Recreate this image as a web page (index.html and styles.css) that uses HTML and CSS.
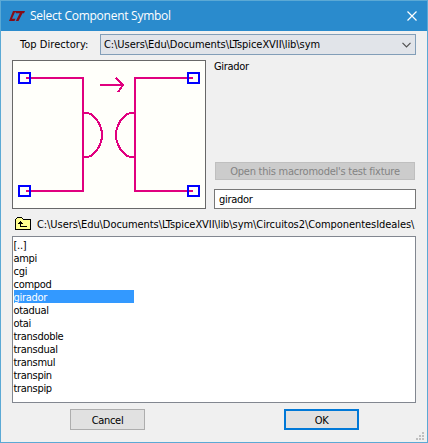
FILE: index.html
```html
<!DOCTYPE html>
<html lang="en">
<head>
<meta charset="utf-8">
<title>Select Component Symbol</title>
<link rel="stylesheet" href="styles.css">
</head>
<body>
<div class="dialog">
  <header class="titlebar">
    <svg class="logo" width="16" height="12" viewBox="0 0 16 12"><path fill="#850d18" d="M4 1H6.500L3 8.800H6.500L5.500 11H0ZM6.300 1H16L15 3.300H13.500L9.500 11H6.800L10.800 3.300H6.800Z"/></svg>
    <h1 class="title">Select Component Symbol</h1>
    <svg class="close" width="10" height="10" viewBox="0 0 10 10"><path fill="none" stroke="#fff" stroke-width="1.2" d="M.5.5l9 9M9.500.5l-9 9"/></svg>
  </header>
  <main class="content">
    <div class="directory">
      <span class="label">Top Directory:</span>
      <div class="combo"><span class="combo-text">C:\Users\Edu\Documents\LTspiceXVII\lib\sym</span>
        <svg width="9" height="6" viewBox="0 0 9 6"><path fill="none" stroke="#505050" stroke-width="1.2" d="M.5.8l4 4 4-4"/></svg>
      </div>
    </div>
    <div class="detail">
      <svg class="preview" width="192" height="147" viewBox="13 61 192 147">
        <g fill="none" stroke="#e0007f" stroke-width="2" shape-rendering="crispEdges">
          <path d="M26 78H83V191H26"/>
          <path d="M193 78H135V191H193"/>
          <path d="M84 113H88C95 115 102 125 102 135S95 155 88 157H84"/>
          <path d="M134 113H130C123 115 116 125 116 135S123 155 130 157H134"/>
          <path d="M100 85H123M116 78L123 85L118 92"/>
        </g>
        <g fill="none" stroke="#00f" stroke-width="2" shape-rendering="crispEdges">
          <path d="M19 73H30V83H19ZM188 73H199V83H188ZM19 186H30V196H19ZM188 186H199V196H188Z"/>
        </g>
      </svg>
      <div class="info">
        <p class="description">Girador</p>
        <button class="fixture" disabled><span>Open this macromodel's test fixture</span></button>
        <div class="name-field">girador</div>
      </div>
    </div>
    <div class="path">
      <svg width="16" height="13" viewBox="0 0 16 13" shape-rendering="crispEdges"><path fill="#ffff90" stroke="#000" d="M.5 12.500V2.500L2.500.5H6.500L8.500 2.500H15.500V12.500Z"/><path fill="none" stroke="#000" d="M5.500 4V9.500H12M3 6.500H8M4 5.500H7"/></svg>
      <span class="path-text">C:\Users\Edu\Documents\LTspiceXVII\lib\sym\Circuitos2\ComponentesIdeales\</span>
    </div>
    <ul class="list">
      <li>[..]</li>
      <li>ampi</li>
      <li>cgi</li>
      <li>compod</li>
      <li class="selected">girador</li>
      <li>otadual</li>
      <li>otai</li>
      <li>transdoble</li>
      <li>transdual</li>
      <li>transmul</li>
      <li>transpin</li>
      <li>transpip</li>
    </ul>
    <footer class="actions">
      <button class="button">Cancel</button>
      <button class="button primary">OK</button>
    </footer>
  </main>
  <svg class="grip" width="8" height="8" viewBox="0 0 8 8"><path fill="#bfbfbf" d="M6 0h2v2H6zM3 3h2v2H3zM6 3h2v2H6zM0 6h2v2H0zM3 6h2v2H3zM6 6h2v2H6z"/></svg>
</div>
</body>
</html>
```
FILE: styles.css
```css
* { box-sizing: border-box; }
body { margin: 0; font: 11px/13px "DejaVu Sans Condensed", "DejaVu Sans", sans-serif; color: #000; letter-spacing: -0.3px; }
h1, p, ul { margin: 0; padding: 0; }
svg { display: block; flex: none; }
span, h1, li { white-space: nowrap; }
.dialog { position: relative; width: 428px; height: 443px; border: 1px solid #5ba9d5; background: #f0f0f0; }
.titlebar { display: flex; align-items: center; height: 30px; padding: 0 10px 0 8px; background: #2a8bcd; }
.title { margin-left: 5px; color: #fff; font: 12px/16px "Open Sans", sans-serif; letter-spacing: -0.26px; }
.close { margin-left: auto; }
.content { padding: 3px 11px 0; }
.directory { display: flex; align-items: center; height: 21px; }
.label { width: 88px; padding-left: 8px; letter-spacing: 0.05px; }
.combo { display: flex; align-items: center; justify-content: space-between; width: 316px; height: 21px; padding: 0 4px 0 3px; border: 1px solid #829eb8; background: #e1e4e9; }
.combo-text { letter-spacing: -0.07px; }
.detail { display: flex; gap: 8px; margin-top: 5px; }
.preview { box-sizing: content-box; border: 1px solid #686868; background: #fffffa; }
.info { display: flex; flex-direction: column; width: 202px; height: 149px; }
.fixture { width: 200px; height: 18px; margin: auto 0 9px 1px; padding: 0; border: 1px solid #bfbfbf; background: #ccc; color: #838383; font: inherit; letter-spacing: -0.24px; }
.name-field { height: 20px; padding: 3px 4px; border: 1px solid #777; background: #fff; }
.path { display: flex; align-items: center; gap: 6px; height: 27px; padding: 2px 0 0 3px; }
.path-text { padding-top: 2px; letter-spacing: -0.07px; }
.list { height: 167px; padding: 1px; border: 1px solid #828790; background: #fff; list-style: none; }
.list li { width: 120px; height: 13px; line-height: 15px; text-indent: -0.5px; }
.list .selected { background: #3399ff; color: #fff; }
.actions { display: flex; gap: 139px; margin: 6px 0 0 58px; }
.button { width: 75px; height: 21px; padding: 1px 0 0; border: 1px solid #adadad; background: #e1e1e1; color: #000; font: inherit; letter-spacing: inherit; }
.primary { border: 2px solid #0078d7; }
.grip { position: absolute; right: 3px; bottom: 2px; }
```
